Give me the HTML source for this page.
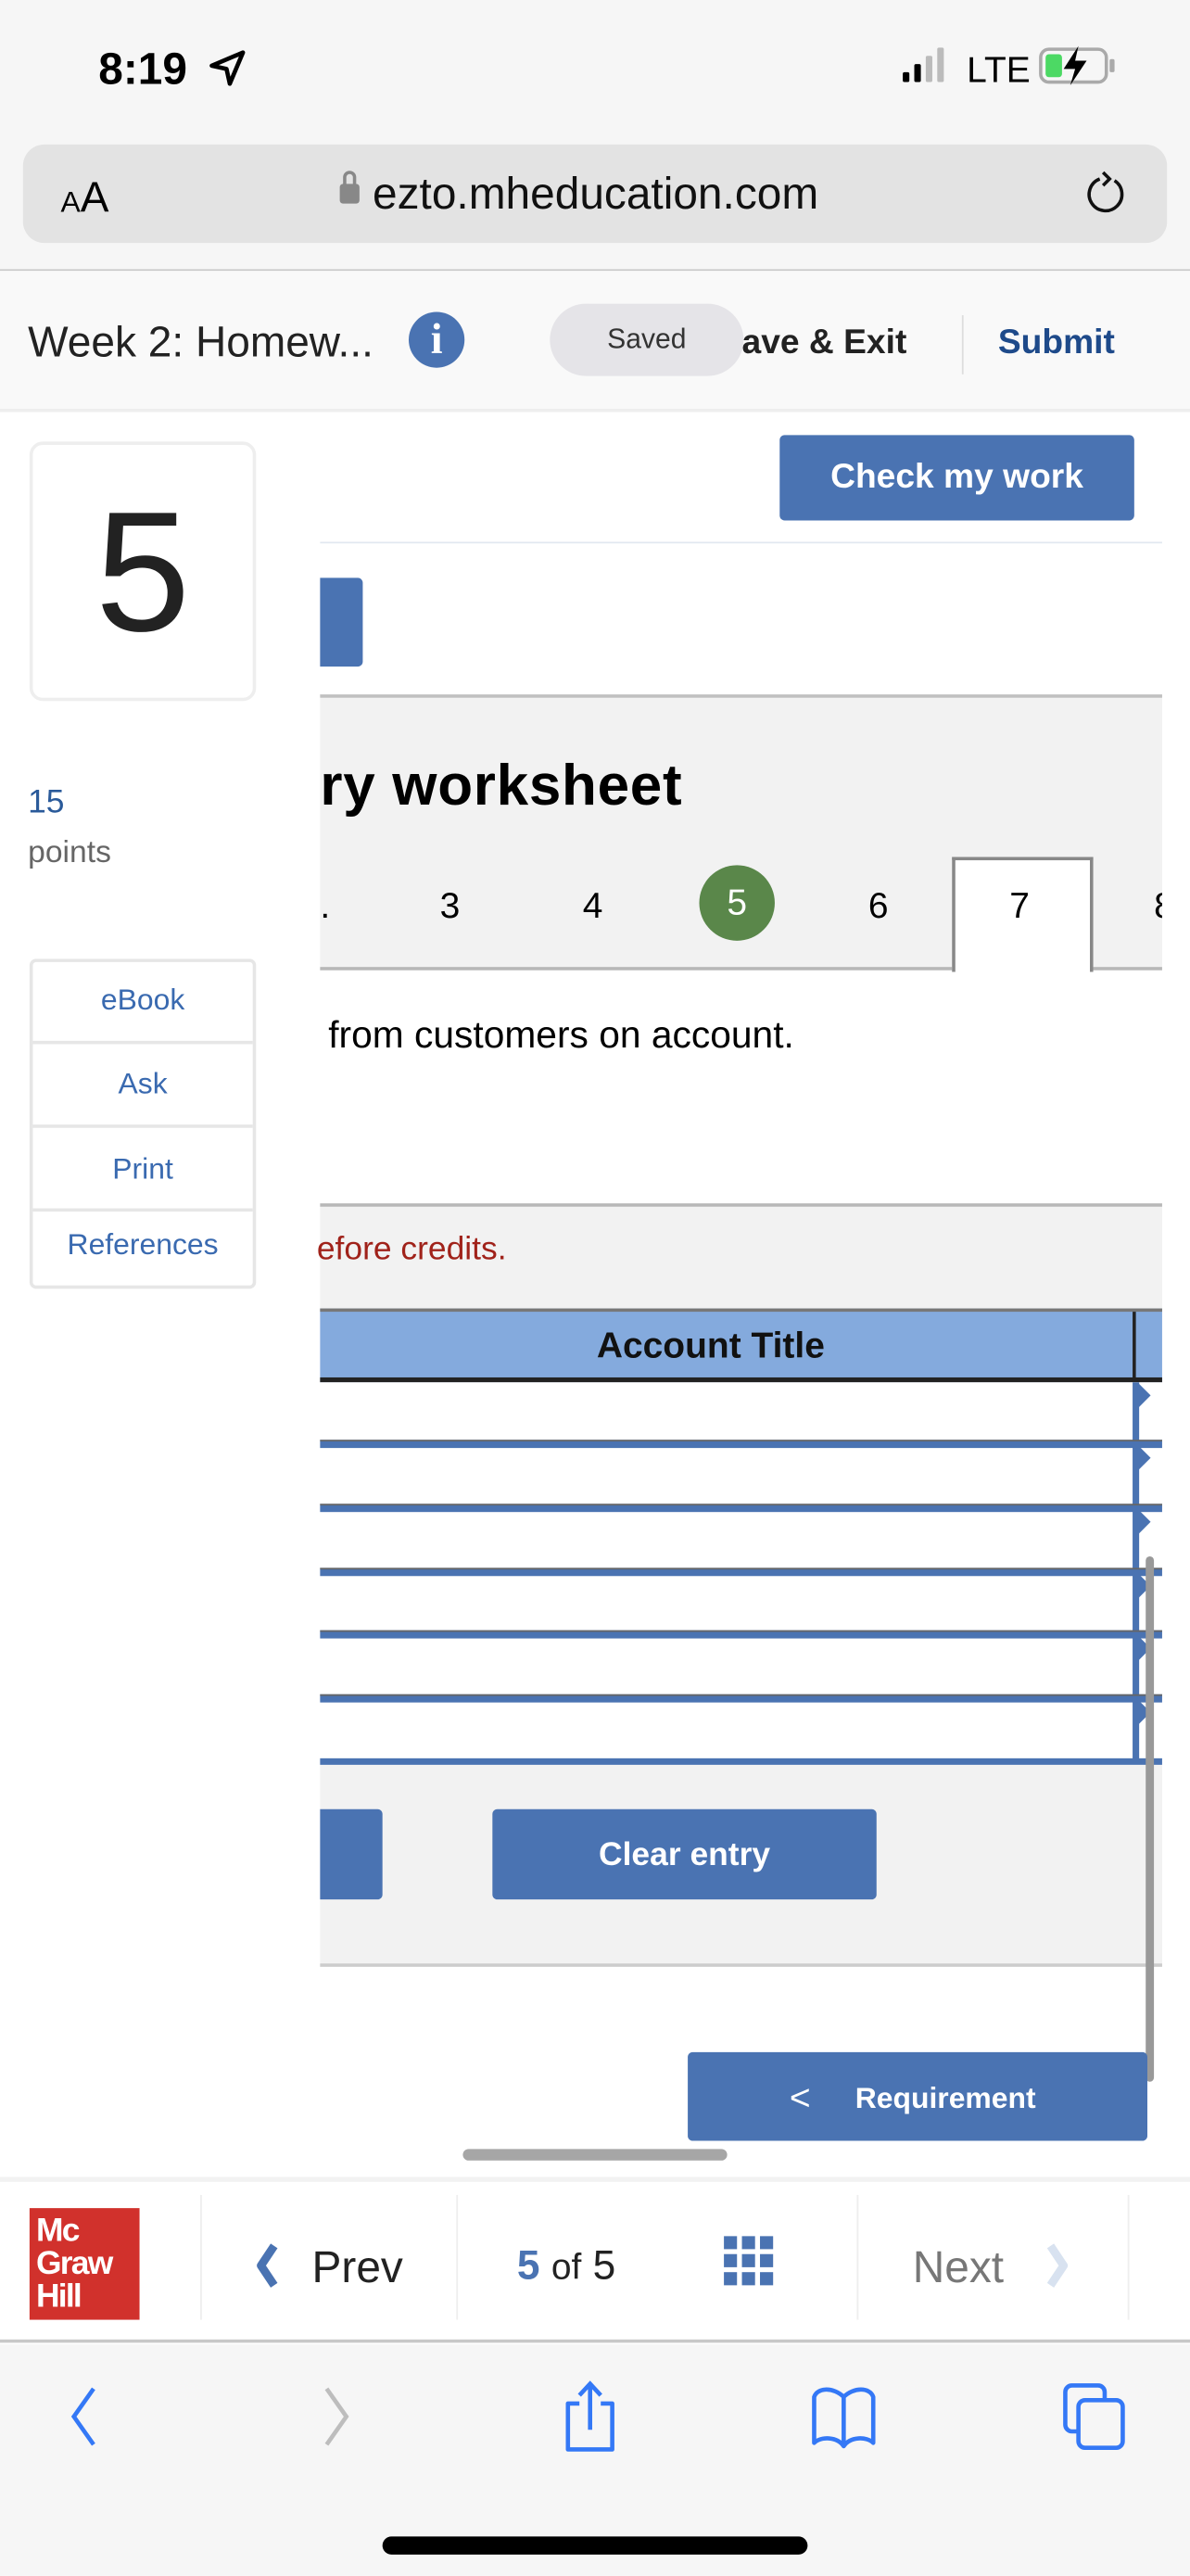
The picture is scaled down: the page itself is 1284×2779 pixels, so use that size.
<!DOCTYPE html>
<html><head><meta charset="utf-8">
<style>
*{margin:0;padding:0;box-sizing:border-box}
html,body{width:1284px;height:2778px;overflow:hidden;background:#f6f6f6}
#w{position:absolute;left:0;top:0;width:725px;height:1569px;transform:scale(1.7711);transform-origin:0 0;font-family:"Liberation Sans",sans-serif;background:#fff}
.a{position:absolute}
.btn{position:absolute;background:#4a73b2;border-radius:3px;color:#fff;font-weight:bold;text-align:center}
</style></head><body><div id="w">
<div class="a" style="left:0;top:0;width:725px;height:165px;background:#f6f6f6;border-bottom:1px solid #c8c8c8"></div>
<div class="a" style="left:60px;top:27px;font-size:27px;font-weight:bold;color:#000">8:19</div>
<svg class="a" style="left:126px;top:29px" width="26" height="26" viewBox="0 0 26 26"><path d="M22 3 L3 11 L12 13 L14 22 Z" fill="none" stroke="#000" stroke-width="2.6" stroke-linejoin="round"/></svg>
<div class="a" style="left:550px;top:44px;width:4px;height:6px;background:#000;border-radius:1px"></div>
<div class="a" style="left:557px;top:39px;width:4px;height:11px;background:#000;border-radius:1px"></div>
<div class="a" style="left:564px;top:34px;width:4px;height:16px;background:#bbb;border-radius:1px"></div>
<div class="a" style="left:571px;top:29px;width:4px;height:21px;background:#bbb;border-radius:1px"></div>
<div class="a" style="left:589px;top:30px;font-size:22px;color:#000">LTE</div>
<div class="a" style="left:633px;top:29px;width:42px;height:22px;border:2px solid #aaa;border-radius:6px"></div>
<div class="a" style="left:637px;top:33px;width:10px;height:14px;background:#4cd964;border-radius:2px"></div>
<div class="a" style="left:676px;top:36px;width:3px;height:8px;background:#aaa;border-radius:1px"></div>
<svg class="a" style="left:645px;top:27px" width="20" height="26" viewBox="0 0 20 26"><path d="M12 1 L3 15 H10 L7 25 L17 10 H10 Z" fill="#000"/></svg>
<div class="a" style="left:14px;top:88px;width:697px;height:60px;background:#e3e3e3;border-radius:13px"></div>
<div class="a" style="left:37px;top:105px;font-size:26px;color:#000"><span style="font-size:18px">A</span>A</div>
<div class="a" style="left:207px;top:112px;width:12px;height:12px;background:#888;border-radius:2px"></div>
<div class="a" style="left:209px;top:104px;width:8px;height:11px;border:2px solid #888;border-radius:4px 4px 0 0"></div>
<div class="a" style="left:227px;top:103px;font-size:27px;color:#111">ezto.mheducation.com</div>
<svg class="a" style="left:660px;top:102px" width="28" height="30" viewBox="0 0 28 30"><path d="M19 8 A10 10 0 1 1 10 7" fill="none" stroke="#111" stroke-width="2"/><path d="M12 3 L16 7 L12 11" fill="none" stroke="#111" stroke-width="2"/></svg>
<div class="a" style="left:0;top:165px;width:725px;height:86px;background:#f9f9f9;border-bottom:2px solid #eee"></div>
<div class="a" style="left:17px;top:193px;font-size:26px;color:#222">Week 2: Homew...</div>
<div class="a" style="left:249px;top:190px;width:34px;height:34px;border-radius:50%;background:#4a73b2;color:#fff;font-weight:bold;font-family:'Liberation Serif',serif;font-size:26px;text-align:center;line-height:34px">i</div>
<div class="a" style="left:452px;top:197px;font-size:21px;font-weight:bold;color:#222">ave &amp; Exit</div>
<div class="a" style="left:335px;top:185px;width:118px;height:44px;border-radius:22px;background:#e5e4e8;font-size:17px;color:#333;text-align:center;line-height:44px">Saved</div>
<div class="a" style="left:586px;top:192px;width:1px;height:36px;background:#ddd"></div>
<div class="a" style="left:608px;top:197px;font-size:21px;font-weight:bold;color:#1e4a8a">Submit</div>
<div class="a" style="left:18px;top:269px;width:138px;height:158px;border:2px solid #eee;border-radius:8px;background:#fff;text-align:center;font-size:104px;color:#222;line-height:156px">5</div>
<div class="a" style="left:17px;top:478px;font-size:20px;color:#2a5a9a">15</div>
<div class="a" style="left:17px;top:509px;font-size:19px;color:#666">points</div>
<div class="a" style="left:18px;top:584px;width:138px;height:201px;border:2px solid #e6e6e6;border-radius:4px;background:#fff"></div>
<div class="a" style="left:20px;top:634px;width:134px;height:2px;background:#e6e6e6"></div>
<div class="a" style="left:20px;top:685px;width:134px;height:2px;background:#e6e6e6"></div>
<div class="a" style="left:20px;top:736px;width:134px;height:2px;background:#e6e6e6"></div>
<div class="a" style="left:18px;top:599px;width:138px;text-align:center;font-size:18px;color:#3a6ab0">eBook</div>
<div class="a" style="left:18px;top:650px;width:138px;text-align:center;font-size:18px;color:#3a6ab0">Ask</div>
<div class="a" style="left:18px;top:702px;width:138px;text-align:center;font-size:18px;color:#3a6ab0">Print</div>
<div class="a" style="left:18px;top:748px;width:138px;text-align:center;font-size:18px;color:#3a6ab0">References</div>
<div class="btn" style="left:475px;top:265px;width:216px;height:52px;font-size:21px;line-height:52px">Check my work</div>
<div class="a" style="left:195px;top:330px;width:513px;height:1px;background:#e2e8f0"></div>
<div class="btn" style="left:195px;top:352px;width:26px;height:54px;border-radius:0 3px 3px 0"></div>
<div class="a" style="left:195px;top:423px;width:513px;height:168px;background:#f2f2f2;border-top:2px solid #c0c0c0;border-bottom:2px solid #b8b8b8"></div>
<div class="a" style="left:195px;top:459px;font-size:35px;font-weight:bold;color:#000;letter-spacing:.4px">ry worksheet</div>
<div class="a" style="left:195px;top:539px;font-size:22px;color:#000">.</div>
<div class="a" style="left:268px;top:539px;font-size:22px;color:#000">3</div>
<div class="a" style="left:355px;top:539px;font-size:22px;color:#000">4</div>
<div class="a" style="left:426px;top:527px;width:46px;height:46px;border-radius:50%;background:#5a874a;color:#fff;font-size:22px;text-align:center;line-height:46px">5</div>
<div class="a" style="left:529px;top:539px;font-size:22px;color:#000">6</div>
<div class="a" style="left:580px;top:522px;width:86px;height:70px;background:#fff;border:2px solid #888;border-bottom:none"></div>
<div class="a" style="left:615px;top:539px;font-size:22px;color:#000">7</div>
<div class="a" style="left:703px;top:539px;font-size:22px;color:#000;width:5px;overflow:hidden">8</div>
<div class="a" style="left:200px;top:617px;font-size:23px;color:#000">from customers on account.</div>
<div class="a" style="left:195px;top:733px;width:513px;height:65px;background:#f2f2f2;border-top:2px solid #b8b8b8"></div>
<div class="a" style="left:193px;top:750px;font-size:20px;color:#a0221a">efore credits.</div>
<div class="a" style="left:195px;top:797px;width:513px;height:45px;background:#84aadd;border-top:2px solid #777;border-bottom:3px solid #222"></div>
<div class="a" style="left:690px;top:799px;width:2px;height:42px;background:#222"></div>
<div class="a" style="left:195px;top:807px;width:476px;text-align:center;font-size:22px;font-weight:bold;color:#111">Account Title</div>
<div class="a" style="left:195px;top:842px;width:513px;height:232px;background:#fff"></div>
<div class="a" style="left:690px;top:842px;width:4px;height:232px;background:#4a73b2"></div>
<div class="a" style="left:195px;top:877px;width:513px;height:5px;background:#4a73b2;border-top:1px solid #666"></div>
<div class="a" style="left:195px;top:916px;width:513px;height:5px;background:#4a73b2;border-top:1px solid #666"></div>
<div class="a" style="left:195px;top:955px;width:513px;height:5px;background:#4a73b2;border-top:1px solid #666"></div>
<div class="a" style="left:195px;top:993px;width:513px;height:5px;background:#4a73b2;border-top:1px solid #666"></div>
<div class="a" style="left:195px;top:1032px;width:513px;height:5px;background:#4a73b2;border-top:1px solid #666"></div>
<div class="a" style="left:195px;top:1071px;width:513px;height:4px;background:#4a73b2"></div>
<svg class="a" style="left:690px;top:842px" width="14" height="232"><g fill="#4a73b2"><path d="M3 0 L11 8 L3 16Z"/><path d="M3 38 L11 46 L3 54Z"/><path d="M3 77 L11 85 L3 93Z"/><path d="M3 116 L11 124 L3 132Z"/><path d="M3 154 L11 162 L3 170Z"/><path d="M3 193 L11 201 L3 209Z"/></g></svg>
<div class="a" style="left:195px;top:1075px;width:513px;height:123px;background:#f2f2f2;border-bottom:2px solid #ccc"></div>
<div class="btn" style="left:195px;top:1102px;width:38px;height:55px;border-radius:0 3px 3px 0"></div>
<div class="btn" style="left:300px;top:1102px;width:234px;height:55px;font-size:20px;line-height:57px">Clear entry</div>
<div class="a" style="left:698px;top:948px;width:5px;height:320px;background:#999;border-radius:3px"></div>
<div class="btn" style="left:419px;top:1250px;width:280px;height:54px;font-size:18px;line-height:56px;text-align:left"><span style="position:absolute;left:62px;font-weight:normal;font-size:22px">&lt;</span><span style="position:absolute;left:102px">Requirement</span></div>
<div class="a" style="left:282px;top:1309px;width:161px;height:7px;background:#a6a6a6;border-radius:4px"></div>
<div class="a" style="left:0;top:1326px;width:725px;height:101px;background:#fff;border-top:3px solid #f2f2f2;border-bottom:2px solid #c8c8c8"></div>
<div class="a" style="left:18px;top:1345px;width:67px;height:68px;background:#d1312c;color:#fff;font-weight:bold;font-size:20px;line-height:20px;padding:4px 0 0 4px;letter-spacing:-1px">Mc<br>Graw<br>Hill</div>
<div class="a" style="left:122px;top:1337px;width:1px;height:76px;background:#eee"></div>
<div class="a" style="left:278px;top:1337px;width:1px;height:76px;background:#eee"></div>
<div class="a" style="left:522px;top:1337px;width:1px;height:76px;background:#eee"></div>
<div class="a" style="left:687px;top:1337px;width:1px;height:76px;background:#eee"></div>
<svg class="a" style="left:155px;top:1366px" width="16" height="28"><path d="M12 2 L4 14 L12 26" fill="none" stroke="#4a73b2" stroke-width="5" stroke-linejoin="round"/></svg>
<div class="a" style="left:190px;top:1366px;font-size:27px;color:#222">Prev</div>
<div class="a" style="left:315px;top:1366px;font-size:25px;color:#222"><b style="color:#4a73b2">5</b> <span style="font-size:22px">of</span> 5</div>
<svg class="a" style="left:441px;top:1362px" width="32" height="32"><g fill="#4a73b2"><rect x="0" y="0" width="8" height="8"/><rect x="11" y="0" width="8" height="8"/><rect x="22" y="0" width="8" height="8"/><rect x="0" y="11" width="8" height="8"/><rect x="11" y="11" width="8" height="8"/><rect x="22" y="11" width="8" height="8"/><rect x="0" y="22" width="8" height="8"/><rect x="11" y="22" width="8" height="8"/><rect x="22" y="22" width="8" height="8"/></g></svg>
<div class="a" style="left:556px;top:1366px;font-size:27px;color:#777">Next</div>
<svg class="a" style="left:636px;top:1366px" width="16" height="28"><path d="M4 2 L12 14 L4 26" fill="none" stroke="#d8e2f0" stroke-width="5" stroke-linejoin="round"/></svg>
<div class="a" style="left:0;top:1428px;width:725px;height:141px;background:#f6f6f6"></div>
<svg class="a" style="left:36px;top:1452px" width="28" height="40"><path d="M21 3 L9 20 L21 37" fill="none" stroke="#3478f6" stroke-width="2.6"/></svg>
<svg class="a" style="left:192px;top:1452px" width="28" height="40"><path d="M7 3 L19 20 L7 37" fill="none" stroke="#bdbdbd" stroke-width="2.6"/></svg>
<svg class="a" style="left:340px;top:1450px" width="40" height="46"><path d="M13 14 H6 V42 H33 V14 H26" fill="none" stroke="#3478f6" stroke-width="2.6" stroke-linejoin="round"/><path d="M19.5 30 V3 M13 9 L19.5 2 L26 9" fill="none" stroke="#3478f6" stroke-width="2.6"/></svg>
<svg class="a" style="left:492px;top:1452px" width="44" height="40"><path d="M22 8 C16 2 6 2 4 8 V36 C8 32 18 32 22 38 C26 32 36 32 40 36 V8 C38 2 28 2 22 8 V38" fill="none" stroke="#3478f6" stroke-width="2.6" stroke-linejoin="round"/></svg>
<svg class="a" style="left:645px;top:1450px" width="44" height="44"><rect x="4" y="3" width="24" height="28" rx="4" fill="none" stroke="#3478f6" stroke-width="2.6"/><rect x="12" y="12" width="27" height="29" rx="4" fill="#f6f6f6" stroke="#3478f6" stroke-width="2.6"/></svg>
<div class="a" style="left:233px;top:1545px;width:259px;height:11px;background:#000;border-radius:6px"></div>
</div></body></html>
